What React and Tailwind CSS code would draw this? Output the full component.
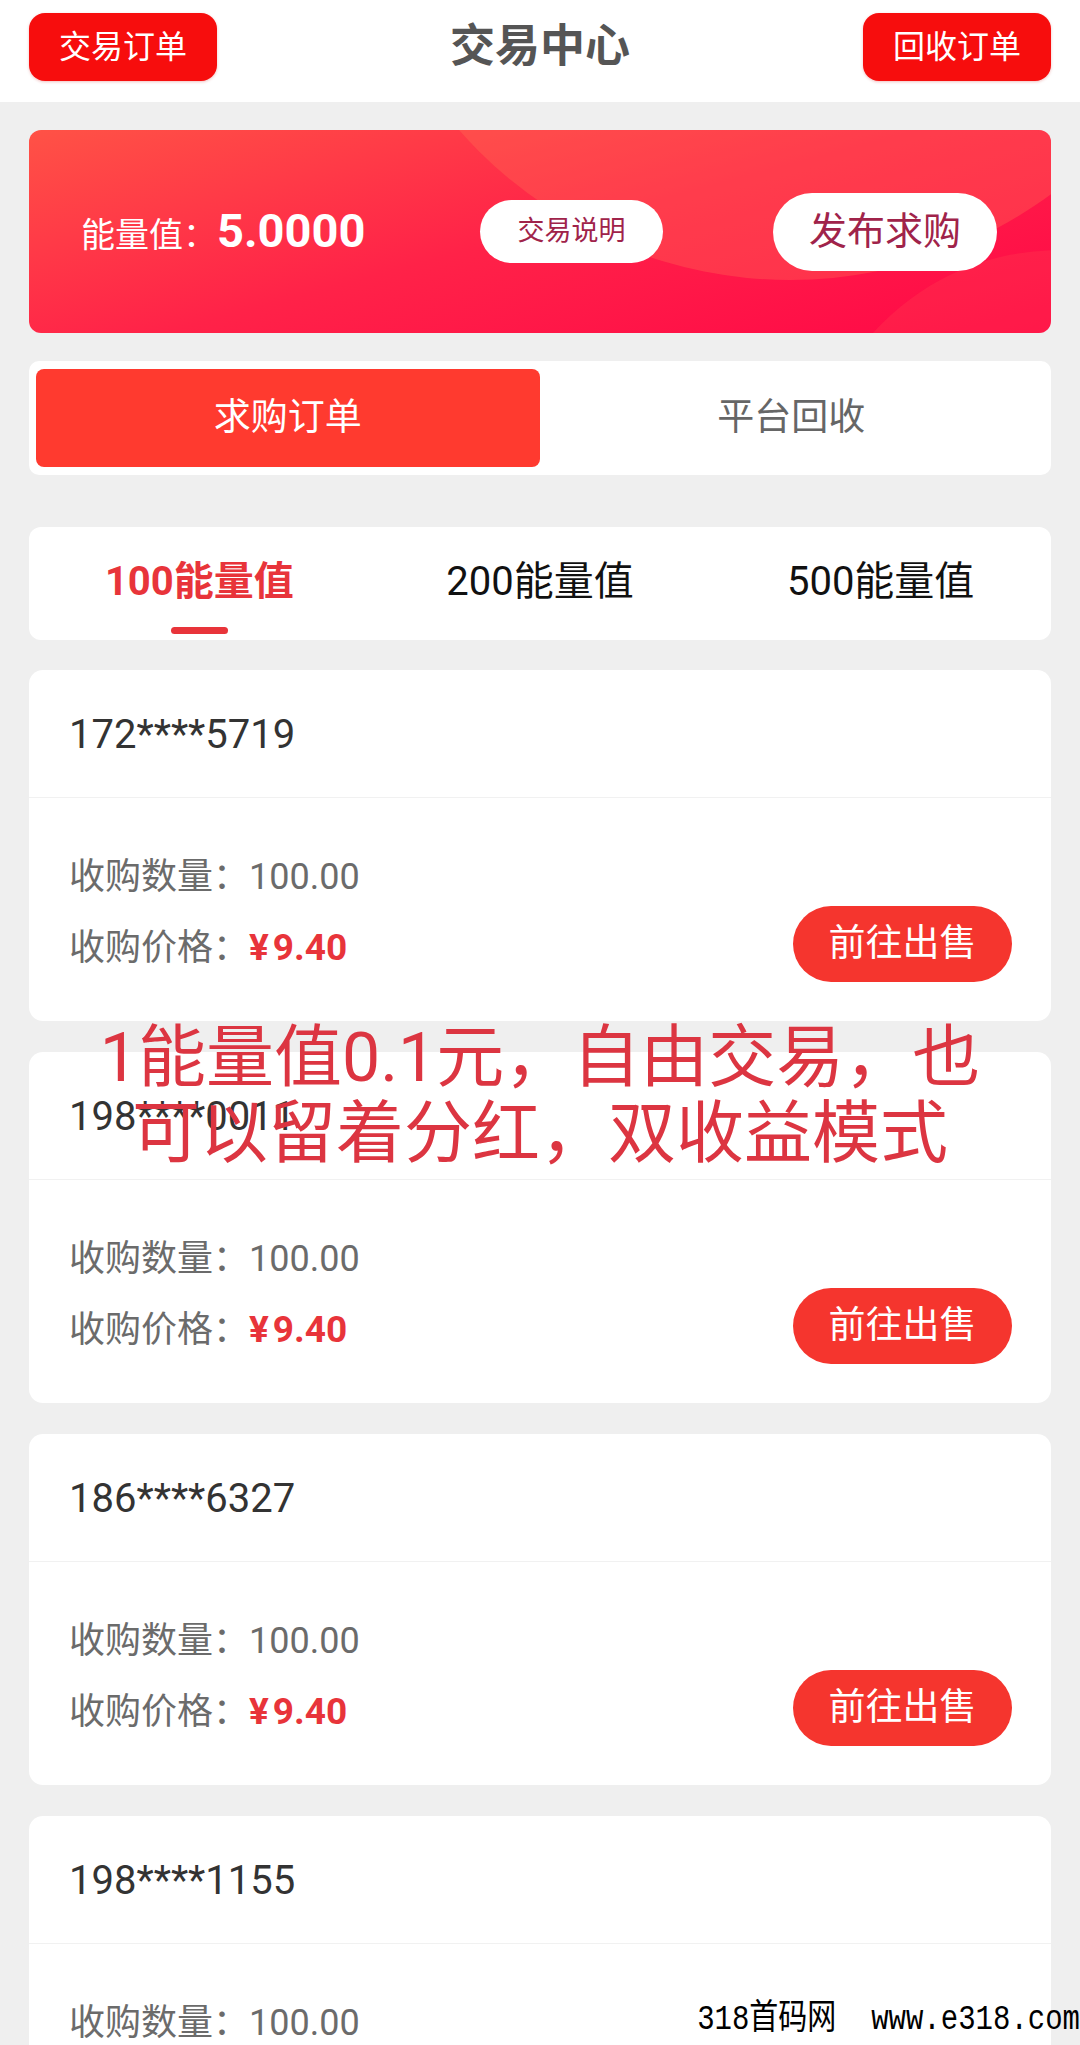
import React from "react";

const orders = [
  { phone: "172****5719" },
  { phone: "198****0011" },
  { phone: "186****6327" },
  { phone: "198****1155" },
];

function OrderCard({ phone }) {
  return (
    <div className="bg-white rounded-[14px] h-[351px] flex flex-col shrink-0">
      <div className="h-[128px] flex items-center pl-[40px] pt-[2px] text-[40px] text-[#333333] border-b border-[#f1f1f1]">
        {phone}
      </div>
      <div className="flex justify-between pl-[40px] pr-[39px] pt-[54px]">
        <div className="flex flex-col gap-[21px]">
          <div className="h-[50px] flex items-center text-[36px] text-[#6b6b6b]">
            <span>收购数量：</span>
            <span>100.00</span>
          </div>
          <div className="h-[50px] flex items-center text-[36px] text-[#6b6b6b]">
            <span>收购价格：</span>
            <span className="font-bold text-[#e8343a] text-[37px]">
              <span className="mr-[4px]">¥</span>9.40
            </span>
          </div>
        </div>
        <div className="mt-[54px] w-[219px] h-[76px] rounded-full bg-[#f5352e] text-white text-[37px] flex items-center justify-center">
          前往出售
        </div>
      </div>
    </div>
  );
}

export default function App() {
  return (
    <div className="relative w-[1080px] h-[2045px] overflow-hidden bg-[#efefef] font-['Roboto','Noto_Sans_CJK_SC',sans-serif]">
      {/* Header */}
      <div className="h-[102px] bg-white flex items-start justify-between px-[29px] pt-[13px]">
        <div className="w-[188px] h-[68px] rounded-[16px] bg-[#f70d0d] text-white text-[32px] flex items-center justify-center shadow-[0_1px_3px_rgba(200,0,0,0.25)]">
          交易订单
        </div>
        <div className="h-[68px] flex items-center text-[45px] font-bold text-[#555555]">
          交易中心
        </div>
        <div className="w-[188px] h-[68px] rounded-[16px] bg-[#f70d0d] text-white text-[32px] flex items-center justify-center shadow-[0_1px_3px_rgba(200,0,0,0.25)]">
          回收订单
        </div>
      </div>

      <div className="px-[29px] flex flex-col">
        {/* Banner */}
        <div className="relative mt-[28px] h-[203px] rounded-[12px] overflow-hidden bg-[linear-gradient(165deg,#ff5246_0%,#ff2248_50%,#ff0847_100%)] flex items-center pl-[52px] pr-[54px]">
          <div className="absolute left-[321px] top-[-730px] w-[880px] h-[880px] rounded-full bg-[#ff7a55] opacity-30" />
          <div className="absolute left-[780px] top-[120px] w-[500px] h-[500px] rounded-full bg-[#ff5a55] opacity-20" />
          <div className="relative flex items-baseline text-white">
            <span className="text-[34px]">能量值：</span>
            <span className="text-[47px] font-bold">5.0000</span>
          </div>
          <div className="relative ml-auto w-[183px] h-[63px] rounded-full bg-white text-[#a0234a] text-[27px] flex items-center justify-center">
            交易说明
          </div>
          <div className="relative ml-[110px] w-[224px] h-[78px] rounded-full bg-white text-[#a0234a] text-[38px] flex items-center justify-center">
            发布求购
          </div>
        </div>

        {/* Tabs */}
        <div className="mt-[28px] h-[114px] rounded-[10px] bg-white p-[8px] pl-[7px] grid grid-cols-2">
          <div className="rounded-[8px] bg-[#ff3a2f] text-white text-[37px] flex items-center justify-center">
            求购订单
          </div>
          <div className="text-[#666666] text-[37px] flex items-center justify-center">
            平台回收
          </div>
        </div>

        {/* Amount tabs */}
        <div className="mt-[52px] h-[113px] rounded-[12px] bg-white grid grid-cols-3">
          <div className="flex flex-col items-center pt-[33px]">
            <div className="leading-[44px] text-[40px] font-bold text-[#e8343a]">100能量值</div>
            <div className="mt-[23px] w-[57px] h-[7px] rounded-full bg-[#e8343a]" />
          </div>
          <div className="flex flex-col items-center pt-[33px]">
            <div className="leading-[44px] text-[40px] text-[#111111]">200能量值</div>
          </div>
          <div className="flex flex-col items-center pt-[33px]">
            <div className="leading-[44px] text-[40px] text-[#111111]">500能量值</div>
          </div>
        </div>

        {/* Orders */}
        <div className="mt-[30px] flex flex-col gap-[31px]">
          {orders.map((o, i) => (
            <OrderCard key={i} phone={o.phone} />
          ))}
        </div>
      </div>

      {/* Red overlay annotation */}
      <div className="absolute left-0 right-0 top-[1020px] text-center text-[68px] leading-[76px] text-[#dc3541] pointer-events-none">
        <div>1能量值0.1元，自由交易，也</div>
        <div>可以留着分红，双收益模式</div>
      </div>

      {/* Site watermark */}
      <div className="absolute right-[0px] top-[2006px] text-[29px] leading-[36px] text-black whitespace-pre origin-bottom scale-y-[1.2] font-['Liberation_Mono','Noto_Sans_CJK_SC',monospace] pointer-events-none">
        318首码网  www.e318.com
      </div>
    </div>
  );
}
